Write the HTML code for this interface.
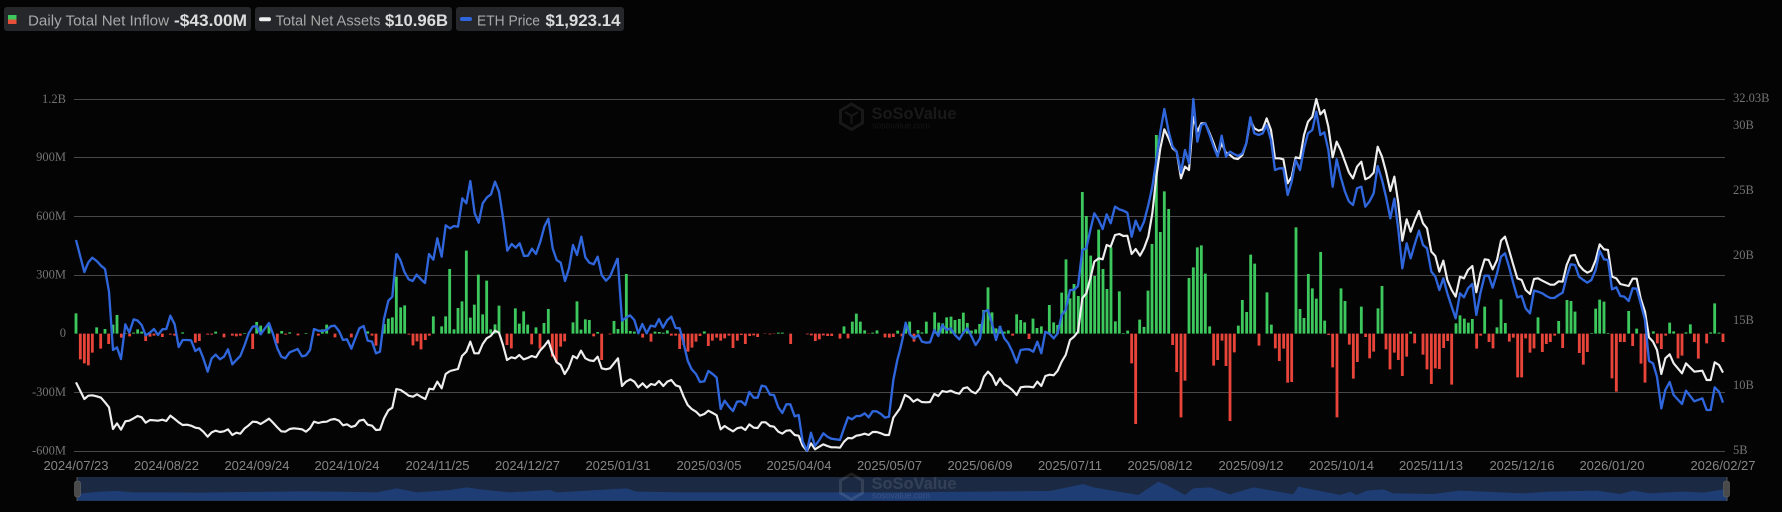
<!DOCTYPE html>
<html><head><meta charset="utf-8"><title>ETH ETF Chart</title>
<style>
html,body{margin:0;padding:0;background:#040404;width:1782px;height:512px;overflow:hidden}
svg{display:block}
.y{font:12.5px "Liberation Serif",serif;fill:#737373}
.x{font:13px "Liberation Sans",sans-serif;fill:#858585;text-anchor:middle}
.l{font:14.5px "Liberation Sans",sans-serif;fill:#a8a8a8}
.v{font:bold 16.5px "Liberation Sans",sans-serif;fill:#dcdcdc}
.g{fill:none;stroke:#3cc85c;stroke-width:8.5}
.r{fill:none;stroke:#e8443a;stroke-width:8.5}
.w{fill:none;stroke:#eeeeee;stroke-width:6.5;stroke-linejoin:round}
.b{fill:none;stroke:#2f66dc;stroke-width:7;stroke-linejoin:round}
.a{fill:#1f3d75}
</style></head><body>
<svg width="1782" height="512" viewBox="0 0 1782 512" xmlns="http://www.w3.org/2000/svg">
<rect width="1782" height="512" fill="#040404"/>
<!-- legend -->
<rect x="4" y="7" width="247" height="24" rx="3" fill="#26272b"/>
<rect x="255" y="7" width="197" height="24" rx="3" fill="#26272b"/>
<rect x="456" y="7" width="168" height="24" rx="3" fill="#26272b"/>
<rect x="8" y="15" width="8.5" height="4.500" fill="#3cc85c"/><rect x="8" y="19.500" width="8.5" height="4.500" fill="#e8503a"/>
<rect x="259" y="17.300" width="12" height="4" rx="2" fill="#eeeeee"/>
<rect x="460" y="17" width="12" height="4" rx="2" fill="#2f66dc"/>
<text class="l" x="28" y="25.500" textLength="141" lengthAdjust="spacingAndGlyphs">Daily Total Net Inflow</text>
<text class="v" x="174" y="26" textLength="73" lengthAdjust="spacingAndGlyphs">-$43.00M</text>
<text class="l" x="275.5" y="25.500" textLength="105" lengthAdjust="spacingAndGlyphs">Total Net Assets</text>
<text class="v" x="385" y="26" textLength="63" lengthAdjust="spacingAndGlyphs">$10.96B</text>
<text class="l" x="477" y="25.500" textLength="63" lengthAdjust="spacingAndGlyphs">ETH Price</text>
<text class="v" x="545.500" y="26" textLength="75" lengthAdjust="spacingAndGlyphs">$1,923.14</text>
<!-- grid -->
<g stroke="#484848" stroke-width="1">
<path d="M74 99.500H1725M74 157.500H1725M74 216.500H1725M74 275.500H1725M74 392.500H1725M74 451.500H1725"/>
</g>
<!-- watermark -->
<g>
<path d="M851.500 104l11 6.500v12.500l-11 6.500-11-6.500v-12.500z" fill="none" stroke="#181818" stroke-width="3"/>
<path d="M845 112l6.500 4 6.500-4M851.500 116v8" fill="none" stroke="#181818" stroke-width="2"/>
<text x="871.500" y="119" font-family="Liberation Sans,sans-serif" font-weight="bold" font-size="17" fill="#191919" textLength="85" lengthAdjust="spacingAndGlyphs">SoSoValue</text>
<text x="872" y="128.500" font-family="Liberation Sans,sans-serif" font-size="9" fill="#151515" textLength="58" lengthAdjust="spacingAndGlyphs">sosovalue.com</text>
</g>
<!-- y labels -->
<g text-anchor="end">
<text class="y" x="66" y="103">1.2B</text>
<text class="y" x="66" y="161">900M</text>
<text class="y" x="66" y="220">600M</text>
<text class="y" x="66" y="278.500">300M</text>
<text class="y" x="66" y="337">0</text>
<text class="y" x="66" y="396">-300M</text>
<text class="y" x="66" y="454.500">-600M</text>
</g>
<text class="y" x="1733" y="102">32.03B</text>
<text class="y" x="1733" y="129">30B</text>
<text class="y" x="1733" y="194">25B</text>
<text class="y" x="1733" y="259">20B</text>
<text class="y" x="1733" y="324">15B</text>
<text class="y" x="1733" y="389">10B</text>
<text class="y" x="1733" y="454">5B</text>
<!-- x labels -->
<text class="x" x="76" y="470">2024/07/23</text>
<text class="x" x="166.500" y="470">2024/08/22</text>
<text class="x" x="257" y="470">2024/09/24</text>
<text class="x" x="347" y="470">2024/10/24</text>
<text class="x" x="437.500" y="470">2024/11/25</text>
<text class="x" x="527.500" y="470">2024/12/27</text>
<text class="x" x="618" y="470">2025/01/31</text>
<text class="x" x="709" y="470">2025/03/05</text>
<text class="x" x="799" y="470">2025/04/04</text>
<text class="x" x="889.500" y="470">2025/05/07</text>
<text class="x" x="980" y="470">2025/06/09</text>
<text class="x" x="1070" y="470">2025/07/11</text>
<text class="x" x="1160" y="470">2025/08/12</text>
<text class="x" x="1251" y="470">2025/09/12</text>
<text class="x" x="1341.500" y="470">2025/10/14</text>
<text class="x" x="1431" y="470">2025/11/13</text>
<text class="x" x="1522" y="470">2025/12/16</text>
<text class="x" x="1612" y="470">2026/01/20</text>
<text class="x" x="1723" y="470">2026/02/27</text>
<!-- slider -->
<rect x="77" y="477" width="1650" height="24" fill="#1b2a42"/>
<g transform="translate(0,230) scale(.33333)"><path class="a" d="M231 812V792L300 785 350 783 400 787 500 787 600 788 900 784 1000 785 1130 787 1190 775 1250 787 1352 780V812Z"/></g>
<g transform="translate(450,230) scale(.33333)"><path class="a" d="M0 812V780L50 772 90 778 180 787 300 780 320 787 530 775 560 785 700 787 1352 787V812Z"/></g>
<g transform="translate(900,80) scale(.33333)"><path class="a" d="M0 1262V1237L450 1233 550 1212 580 1222 715 1245 775 1205 800 1215 855 1245 880 1225 930 1222 990 1243 1060 1222 1180 1243 1195 1220 1320 1245 1352 1235V1262Z"/></g>
<g transform="translate(1350,80) scale(.33333)"><path class="a" d="M0 1262V1235L20 1245 50 1232 100 1228 130 1240 250 1242 330 1232 520 1240 600 1235 740 1232 810 1242 850 1232 900 1240 1000 1235 1060 1238 1120 1228 1133 1228V1262Z"/></g>
<g opacity=".1">
<path d="M851.500 474l11 6.500v12.500l-11 6.500-11-6.500v-12.500z" fill="none" stroke="#fff" stroke-width="3"/>
<text x="871.500" y="489" font-family="Liberation Sans,sans-serif" font-weight="bold" font-size="17" fill="#fff" textLength="85" lengthAdjust="spacingAndGlyphs">SoSoValue</text>
<text x="872" y="498.500" font-family="Liberation Sans,sans-serif" font-size="9" fill="#fff" textLength="58" lengthAdjust="spacingAndGlyphs">sosovalue.com</text>
</g>
<path d="M77 477V501M1727 477V501" stroke="#555" stroke-width="1"/>
<rect x="74.500" y="481" width="6" height="16" rx="2.500" fill="#4a4a4a" stroke="#666" stroke-width=".6"/>
<rect x="1723.500" y="481" width="6" height="16" rx="2.500" fill="#4a4a4a" stroke="#666" stroke-width=".6"/>
<!-- bars section 1 -->
<g transform="translate(0,230) scale(.33333)">
<path class="g" d="M228 311V250M290 311V292M315 311V297M339 311V284M351 311V255M376 311V309M401 311V308M413 311V298M425 311V305M474 311V309M548 311V307M647 311V305M734 311V309M770 311V276M782 311V287M807 311V283M845 311V303M869 311V307M918 311V309M967 311V298M980 311V284M1103 311V304M1153 311V282M1165 311V266M1177 311V262M1189 311V140M1202 311V232M1214 311V226M1300 311V259M1325 311V289M1337 311V259M1349 311V117"/>
<path class="r" d="M241 311V388M253 311V400M265 311V406M277 311V368M302 311V356M326 311V342M364 311V323M389 311V319M437 311V333M450 311V320M462 311V317M487 311V321M511 311V314M524 311V317M586 311V338M598 311V333M623 311V314M635 311V314M672 311V322M697 311V317M709 311V319M721 311V317M758 311V357M832 311V340M857 311V314M894 311V316M955 311V317M1005 311V322M1054 311V322M1116 311V317M1128 311V347M1227 311V314M1239 311V346M1251 311V334M1263 311V358M1276 311V330M1288 311V317"/>
</g>
<g transform="translate(450,230) scale(.33333)">
<path class="g" d="M12 311V298M24 311V234M36 311V214M49 311V62M61 311V263M73 311V224M85 311V134M98 311V253M110 311V152M122 311V298M135 311V283M147 311V227M196 311V235M208 311V281M221 311V244M233 311V284M258 311V292M282 311V279M295 311V237M369 311V277M381 311V214M393 311V299M406 311V268M418 311V270M443 311V306M492 311V273M504 311V297M517 311V273M529 311V132M541 311V303M553 311V305M615 311V305M628 311V306M640 311V308M652 311V301M763 311V304M985 311V308M997 311V308M1182 311V289M1207 311V275M1219 311V251M1231 311V275M1244 311V301M1268 311V308M1281 311V301M1343 311V302"/>
<path class="r" d="M171 311V345M184 311V355M245 311V343M270 311V356M307 311V380M319 311V397M332 311V350M344 311V334M431 311V319M455 311V390M480 311V313M578 311V323M603 311V335M664 311V317M677 311V317M689 311V357M701 311V345M714 311V365M726 311V353M738 311V335M750 311V318M775 311V348M787 311V332M800 311V323M812 311V332M824 311V325M837 311V317M849 311V354M862 311V332M874 311V315M886 311V342M899 311V318M911 311V316M923 311V321M945 311V312M960 311V313M972 311V312M1022 311V342M1072 311V313M1084 311V316M1096 311V333M1108 311V328M1120 311V316M1133 311V318M1145 311V318M1170 311V326M1194 311V325M1256 311V312M1305 311V322M1318 311V323M1330 311V321"/>
</g>
<g transform="translate(900,80) scale(.33333)">
<path class="g" d="M17 761V735M29 761V725M54 761V750M66 761V757M79 761V725M104 761V697M116 761V728M128 761V730M140 761V712M153 761V710M165 761V720M178 761V717M190 761V698M202 761V729M214 761V752M227 761V748M239 761V732M251 761V690M264 761V622M276 761V697M288 761V745M300 761V738M313 761V755M325 761V751M350 761V703M362 761V720M374 761V727M399 761V716M411 761V744M424 761V739M448 761V675M461 761V727M473 761V735M485 761V638M498 761V538M510 761V655M522 761V612M535 761V648M547 761V336M559 761V408M572 761V527M584 761V588M596 761V449M609 761V567M621 761V627M633 761V502M646 761V724M658 761V634M670 761V759M683 761V752M719 761V719M732 761V741M744 761V632M756 761V492M769 761V165M781 761V456M793 761V334M806 761V387M867 761V594M880 761V562M892 761V502M904 761V496M916 761V581M929 761V739M1015 761V737M1027 761V660M1040 761V696M1052 761V524M1064 761V551M1101 761V637M1114 761V734M1188 761V442M1200 761V687M1212 761V714M1225 761V582M1237 761V625M1249 761V656M1262 761V516M1274 761V722M1323 761V625M1335 761V663"/>
<path class="r" d="M6 761V769M42 761V785M338 761V767M387 761V777M695 761V850M707 761V1032M818 761V795M830 761V876M843 761V1012M855 761V902M941 761V857M953 761V840M966 761V782M978 761V858M990 761V1023M1003 761V817M1077 761V797M1126 761V805M1138 761V843M1151 761V806M1163 761V908M1175 761V906M1286 761V765M1298 761V862M1311 761V1012M1348 761V794"/>
</g>
<g transform="translate(1350,80) scale(.33333)">
<path class="g" d="M34 761V680M84 761V685M96 761V618M182 761V755M318 761V730M330 761V706M343 761V716M355 761V728M367 761V717M404 761V680M441 761V742M453 761V658M466 761V729M564 761V712M626 761V723M651 761V660M663 761V663M675 761V695M725 761V759M737 761V686M749 761V659M762 761V665M774 761V759M836 761V693M860 761V746M897 761V760M910 761V754M959 761V728M971 761V754M1008 761V757M1021 761V733M1082 761V757M1094 761V670M1107 761V758"/>
<path class="r" d="M10 761V896M22 761V846M47 761V771M59 761V835M71 761V815M108 761V808M120 761V868M133 761V818M145 761V840M157 761V888M170 761V830M194 761V790M219 761V824M231 761V868M244 761V912M256 761V865M268 761V867M281 761V804M293 761V783M305 761V914M380 761V806M392 761V767M417 761V786M429 761V805M478 761V785M490 761V773M503 761V892M515 761V892M527 761V775M540 761V818M552 761V805M577 761V816M589 761V792M601 761V786M614 761V767M638 761V804M688 761V819M700 761V854M712 761V816M786 761V895M799 761V935M811 761V786M823 761V786M848 761V798M873 761V851M885 761V908M922 761V790M934 761V807M947 761V767M984 761V835M996 761V827M1033 761V786M1045 761V836M1070 761V790M1119 761V786"/>
</g>
<!-- white line -->
<g transform="translate(0,230) scale(.33333)"><polyline class="w" points="228,457 253,507 265,497 277,496 290,499 303,503 315,517 327,532 339,597 351,580 363,599 376,574 388,572 401,565 413,558 425,562 437,578 450,570 462,571 474,572 487,569 499,573 511,557 524,567 536,577 548,585 561,584 573,587 586,593 598,595 610,605 623,620 635,607 647,602 660,606 672,604 684,598 697,615 709,608 721,611 734,595 746,586 758,575 770,576 782,582 795,574 807,566 819,578 832,592 844,604 856,605 869,597 881,595 893,596 906,598 918,605 930,595 942,575 955,579 967,576 980,575 992,569 1004,567 1017,572 1029,586 1041,583 1054,591 1066,587 1078,572 1091,569 1103,584 1116,587 1128,600 1140,599 1152,565 1165,541 1177,533 1189,477 1202,480 1214,488 1226,497 1239,500 1251,493 1264,501 1276,507 1288,476 1300,478 1312,455 1325,475 1337,432 1350,423"/></g>
<g transform="translate(450,230) scale(.33333)"><polyline class="w" points="0,423 12,420 24,417 36,378 49,365 61,335 73,370 86,370 98,342 110,325 122,318 135,302 147,308 159,345 171,390 184,382 196,385 208,375 221,388 233,384 245,378 258,382 270,362 283,348 295,332 307,370 320,397 332,405 344,432 356,413 369,378 381,385 393,362 406,385 418,391 431,393 443,380 455,415 468,418 480,415 504,385 516,468 528,455 541,448 553,455 565,472 578,460 590,473 603,462 615,465 627,453 640,468 652,455 664,450 677,466 689,470 701,500 713,525 725,537 738,545 750,557 763,552 775,542 788,549 800,556 812,598 824,588 837,597 849,604 861,595 874,592 886,600 898,583 911,593 923,594 935,577 947,577 960,588 972,590 985,605 997,611 1009,602 1021,601 1034,615 1046,617 1058,647 1071,663 1083,640 1095,658 1108,650 1120,643 1132,648 1144,652 1157,652 1170,653 1182,635 1194,624 1206,625 1219,617 1231,615 1244,611 1256,615 1268,606 1280,606 1293,610 1305,615 1317,615 1330,563 1350,535"/></g>
<g transform="translate(900,80) scale(.33333)"><polyline class="w" points="0,985 15,945 28,952 40,965 52,958 65,966 78,967 90,966 103,942 115,948 127,933 140,936 152,932 165,938 178,941 190,925 202,922 215,935 227,940 240,925 252,890 264,875 276,888 288,915 300,895 313,913 325,920 337,930 350,945 362,922 375,920 387,920 400,922 412,905 424,918 436,888 449,884 461,886 473,872 485,845 497,825 510,780 522,770 534,755 547,655 559,640 571,595 583,545 596,535 608,538 620,495 632,500 645,465 658,462 670,468 682,467 695,522 707,507 720,527 732,505 745,470 757,400 769,290 781,205 793,148 806,175 818,205 830,215 843,295 855,260 867,270 880,110 892,155 904,130 916,130 929,160 941,190 953,225 965,190 978,218 990,225 1002,235 1014,237 1027,225 1039,190 1051,120 1063,145 1076,152 1088,148 1100,115 1113,150 1125,235 1138,235 1150,238 1163,310 1175,290 1187,232 1200,235 1212,165 1224,125 1237,110 1249,57 1261,103 1273,90 1285,140 1298,232 1310,185 1322,210 1335,245 1347,278"/></g>
<g transform="translate(1350,80) scale(.33333)"><polyline class="w" points="-3,278 9,295 21,260 34,245 46,298 58,292 71,278 83,200 96,230 108,275 121,333 133,290 145,370 157,482 170,418 182,455 195,420 207,393 219,430 231,445 244,515 256,528 268,575 280,542 292,600 305,630 317,650 330,590 342,595 354,570 367,558 379,637 391,580 404,538 416,540 428,568 441,540 453,482 465,470 477,510 490,555 502,595 515,600 527,630 540,642 552,597 564,595 577,602 589,608 601,614 613,614 626,604 638,605 650,555 662,527 675,525 687,555 700,570 712,578 724,572 737,540 749,493 762,508 774,510 786,590 799,595 811,612 823,615 836,618 848,596 860,596 872,655 885,695 897,772 909,785 921,810 934,882 946,835 959,823 971,850 996,880 1008,850 1033,875 1057,872 1070,900 1082,900 1094,847 1107,855 1119,878"/></g>
<!-- blue line -->
<g transform="translate(0,230) scale(.33333)"><polyline class="b" points="228,30 253,126 265,97 277,83 290,93 303,107 315,117 327,185 339,360 351,352 363,387 376,283 388,308 401,268 413,272 425,285 437,316 450,308 462,297 474,315 487,298 499,297 511,257 524,283 536,351 548,330 561,330 573,331 586,363 598,355 610,385 623,425 635,385 647,374 660,388 672,380 684,358 697,403 709,390 721,378 734,345 746,310 758,290 770,288 782,313 795,295 807,279 819,312 832,355 844,380 856,385 869,367 881,362 893,357 906,379 918,376 930,360 942,297 955,302 967,303 980,300 992,289 1004,287 1017,303 1029,330 1041,328 1054,356 1066,325 1078,295 1091,288 1103,332 1116,335 1128,370 1140,365 1152,267 1165,212 1177,200 1189,70"/></g>
<g transform="translate(350,80) scale(.33333)"><polyline class="b" points="139,520 151,540 163,575 176,598 188,603 200,584 213,598 225,609 237,522 250,539 262,475 275,530 287,436 300,445 312,438 324,440 337,355 349,370 361,303 374,400 386,428 398,370 411,352 423,343 435,305 447,335 460,420 472,512 485,492 497,503 509,490 522,528 534,527 546,506 558,522 571,485 583,440 595,416 608,505 620,540 632,548 645,603 657,565 669,495 681,525 694,470 706,532 718,548 731,553 743,530 755,585 768,602 780,590 803,534"/></g>
<g transform="translate(450,230) scale(.33333)"><polyline class="b" points="503,84 516,272 528,263 540,256 553,270 565,310 577,282 590,310 602,287 615,290 627,267 639,293 652,270 664,260 677,294 689,295 701,340 713,392 725,418 738,432 750,456 763,454 775,423 788,432 800,443 812,537 824,512 837,530 849,543 861,515 874,514 886,525 898,486 911,503 923,503 935,467 947,470 960,494 972,495 985,532 997,549 1009,523 1021,523 1034,559 1046,555 1058,635 1071,662 1083,608 1095,648 1108,630 1120,610 1132,620 1144,626 1157,628 1170,630 1182,595 1194,562 1206,568 1219,558 1231,558 1244,550 1256,562 1268,544 1280,544 1293,552 1305,563 1317,560 1330,450 1342,390 1350,360"/></g>
<g transform="translate(900,80) scale(.33333)"><polyline class="b" points="0,810 8,775 17,728 29,762 42,775 55,765 66,785 78,788 90,787 103,750 115,768 127,735 140,750 152,745 165,765 178,778 190,758 202,745 215,770 227,795 240,775 252,695 264,690 276,730 288,780 300,740 313,775 325,790 337,815 350,848 362,810 375,808 387,808 400,815 412,785 424,820 436,755 449,762 461,775 473,760 485,705 497,690 510,630 522,630 534,618 547,510 559,505 571,450 583,400 596,420 608,447 620,403 632,430 645,380 658,388 670,392 682,398 695,470 707,422 720,452 732,425 745,375 757,320 769,240 781,155 793,87 806,155 818,200 830,215 843,278 855,210 867,250 880,57 892,185 904,135 916,130 929,165 941,200 953,230 965,167 978,230 990,215 1002,222 1014,228 1027,220 1039,190 1051,112 1063,160 1076,165 1088,160 1100,135 1113,180 1125,270 1138,265 1150,265 1163,345 1175,305 1187,240 1200,270 1212,205 1224,160 1237,150 1249,95 1261,165 1273,157 1285,210 1298,320 1310,238 1322,290 1335,335 1347,365"/></g>
<g transform="translate(1350,80) scale(.33333)"><polyline class="b" points="-3,365 9,375 21,325 34,320 46,380 58,365 71,340 83,258 96,300 108,350 121,415 133,356 145,450 157,565 170,490 182,535 195,490 207,452 219,495 231,505 244,575 256,590 268,630 280,595 292,640 305,680 317,715 330,640 342,652 354,625 367,612 379,705 391,640 404,587 416,587 428,623 441,580 453,530 465,520 477,560 490,610 502,652 515,648 527,685 540,700 552,632 564,635 577,640 589,648 601,654 613,654 626,645 638,638 650,590 662,553 675,555 687,590 700,600 712,608 724,600 737,570 749,512 762,538 774,540 786,628 799,622 811,648 823,650 836,663 848,625 860,626 872,670 885,720 897,843 909,850 921,890 934,985 946,930 959,906 971,945 996,972 1008,932 1033,964 1057,955 1070,990 1082,990 1094,922 1107,935 1119,968"/></g>
</svg>
</body></html>
